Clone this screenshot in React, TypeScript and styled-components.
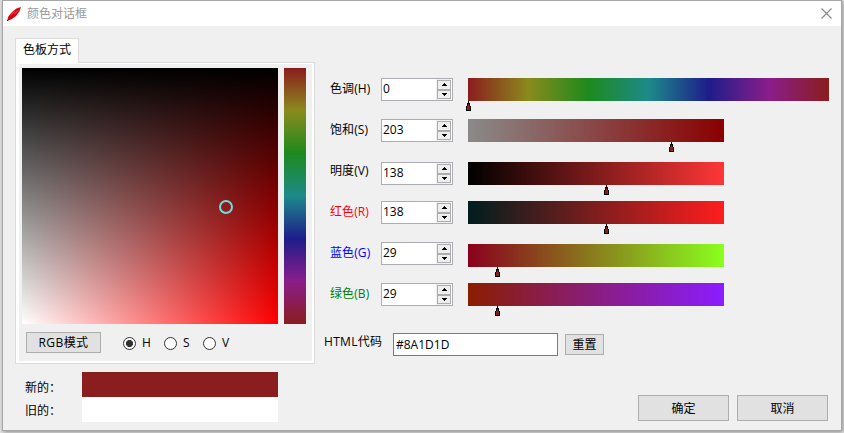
import React from 'react';
import styled, { createGlobalStyle } from 'styled-components';

const GlobalStyle = createGlobalStyle`
  * { box-sizing: border-box; }
  html, body { margin: 0; padding: 0; }
  body {
    width: 844px;
    height: 433px;
    overflow: hidden;
    background: #fff;
    color: #000;
    font: 12px/16px "Open Sans", "Noto Sans CJK SC", sans-serif;
  }
`;

const Desktop = styled.div`
  width: 844px;
  height: 433px;
  padding: 0 2px 2px;
  overflow: hidden;
  background: #e4e4e4;
`;

const Window = styled.div`
  width: 840px;
  height: 431px;
  display: flex;
  flex-direction: column;
  border: 1px solid #a6a6a6;
  background: #f0f0f0;
  box-shadow: 1px 1px 4px #888;
`;

const TitleBar = styled.header`
  flex: none;
  height: 25px;
  display: flex;
  align-items: center;
  padding: 0 9px 0 3px;
  background: #fff;
  color: #999;
`;

const Title = styled.span`
  margin-left: 5px;
  flex: 1;
`;

const Body = styled.main`
  flex: 1;
  display: flex;
`;

const LeftPane = styled.section`
  width: 300px;
  margin: 12px 0 0 12px;
`;

const Tab = styled.div`
  width: 64px;
  height: 25px;
  padding: 3px 0 0 7px;
  margin-bottom: -1px;
  position: relative;
  border: 1px solid #dcdcdc;
  border-bottom: 0;
  background: #fff;
`;

const Panel = styled.div`
  width: 300px;
  height: 302px;
  border: 1px solid #dcdcdc;
  background: #f0f0f0;
  box-shadow: inset 3px 0 #fff, inset -2px 0 #fff, inset 0 1px #fff, inset 0 -2px #fff;
  padding: 5px 0 0 6px;
`;

const Pickers = styled.div`
  display: flex;
  gap: 6px;
`;

const Field = styled.div`
  width: 256px;
  height: 256px;
  position: relative;
  background: linear-gradient(to bottom, #000, transparent), linear-gradient(to right, #fff, #f00);
`;

const Cursor = styled.div`
  position: absolute;
  left: 196.5px;
  top: 131.5px;
  width: 14px;
  height: 14px;
  border: 2px solid #6edcdc;
  border-radius: 50%;
`;

const hueStops = '#8a1d1d, #8a8a1d, #1d8a1d, #1d8a8a, #1d1d8a, #8a1d8a, #8a1d1d';

const HueStrip = styled.div`
  width: 22px;
  height: 256px;
  background: linear-gradient(to bottom, ${hueStops});
`;

const ModeRow = styled.div`
  display: flex;
  align-items: center;
  margin: 8px 0 0 4px;
`;

const Button = styled.button<{ $w: number; $h: number; $spacing?: number }>`
  width: ${p => p.$w}px;
  height: ${p => p.$h}px;
  padding: 1px 0 0;
  border: 1px solid #adadad;
  background: #e1e1e1;
  color: #000;
  font: inherit;
  letter-spacing: ${p => p.$spacing ?? 0}px;
  white-space: nowrap;
`;

const ModeOptions = styled.div`
  display: grid;
  grid-template-columns: 41px 39px 30px;
  margin: 1px 0 0 22px;
`;

const Option = styled.label`
  display: flex;
  align-items: center;
  gap: 6px;
`;

const Dot = styled.span<{ $on?: boolean }>`
  width: 13px;
  height: 13px;
  border: 1px solid #333;
  border-radius: 50%;
  background: ${p => (p.$on ? 'radial-gradient(circle, #333 3.2px, #fff 3.9px)' : '#fff')};
`;

const Compare = styled.div`
  display: grid;
  grid-template-columns: 57px 196px;
  grid-template-rows: 25px 25px;
  padding: 8px 0 0 10px;
`;

const CompareLabel = styled.span<{ $lift?: number }>`
  padding-top: ${p => 8 - (p.$lift ?? 0)}px;
  white-space: nowrap;
`;

const Swatch = styled.div<{ $color: string }>`
  background: ${p => p.$color};
`;

const RightPane = styled.section`
  flex: 1;
  display: flex;
  flex-direction: column;
  padding-top: 52px;
`;

const Channel = styled.div<{ $h: number }>`
  height: ${p => p.$h}px;
  display: flex;
  align-items: flex-start;
  padding-left: 15px;
`;

const ChannelLabel = styled.label<{ $color: string; $top: number }>`
  width: 51px;
  padding-top: ${p => p.$top}px;
  color: ${p => p.$color};
  letter-spacing: 0.1px;
  white-space: nowrap;
`;

const Spin = styled.div`
  width: 72px;
  height: 23px;
  display: flex;
  border: 1px solid #abadb3;
  background: #fff;
`;

const SpinValue = styled.span`
  flex: 1;
  padding: 2px 0 0 1px;
`;

const Arrows = styled.div`
  width: 16px;
  height: 21px;
  display: flex;
  flex-direction: column;
  padding: 1px 0 1px 1px;
  background: #f0f0f0;
  border-right: 1px solid #fff;
`;

const Arrow = styled.span`
  flex: 1;
  width: 14px;
  display: flex;
  align-items: center;
  justify-content: center;
  border: 1px solid #adadad;
  background: #eee;
`;

const Slider = styled.div<{ $wide?: boolean; $top: number }>`
  width: ${p => (p.$wide ? 361 : 256)}px;
  margin: ${p => p.$top}px 0 0 15px;
`;

const Track = styled.div<{ $fill: string }>`
  height: 23px;
  background: linear-gradient(to right, ${p => p.$fill});
`;

const Handle = styled.svg<{ $at: number }>`
  display: block;
  margin-left: ${p => p.$at - 2}px;
`;

const HtmlRow = styled.div`
  display: flex;
  padding: 5px 0 0 9px;
`;

const HtmlLabel = styled.label`
  width: 69px;
  padding-top: 1px;
  letter-spacing: 0.3px;
  white-space: nowrap;
`;

const HtmlInput = styled.div`
  width: 165px;
  height: 23px;
  margin-right: 7px;
  padding: 3px 0 0 2px;
  border: 1px solid #7a7a7a;
  background: #fff;
`;

const ResetWrap = styled.div`
  padding-top: 1px;
`;

const Footer = styled.footer`
  display: flex;
  justify-content: flex-end;
  gap: 8px;
  margin: auto 13px 9px 0;
`;

const LogoIcon = () => (
  <svg width="16" height="16" viewBox="0 0 16 16">
    <path d="M1 15 2.4 10.5 6 6 10.5 2.5 15 1 13.4 5.6 10 10 5.5 13.3Z" fill="#d3070f" />
    <path d="m1 15 2.2-2.2" stroke="#6d1015" />
    <path d="m5 8.8 4-3.6M8.5 8l3.5-3.6" stroke="#f4636a" strokeWidth=".8" />
  </svg>
);

const CloseIcon = () => (
  <svg width="11" height="11" viewBox="0 0 11 11">
    <path d="m.5.5 10 10m0-10-10 10" stroke="#888" strokeWidth="1.1" fill="none" />
  </svg>
);

const Triangle = ({ down }: { down?: boolean }) => (
  <svg width="5" height="3" viewBox="0 0 5 3" shapeRendering="crispEdges">
    <path d={down ? 'M0 0h5v1H4v1H3v1H2V2H1V1H0Z' : 'M2 0h1v1h1v1h1v1H0V2h1V1h1Z'} />
  </svg>
);

type ChannelData = {
  label: string;
  color: string;
  value: number;
  fill: string;
  at: number;
  h: number;
  labelTop: number;
  barTop?: number;
  wide?: boolean;
};

const channels: ChannelData[] = [
  { label: '色调(H)', color: '#000', value: 0, fill: hueStops, at: 0, h: 41, labelTop: 3, wide: true },
  { label: '饱和(S)', color: '#000', value: 203, fill: '#8a8a8a, #8a0000', at: 203, h: 43, labelTop: 3 },
  { label: '明度(V)', color: '#000', value: 138, fill: '#000, #ff3636', at: 138, h: 39, labelTop: 1 },
  { label: '红色(R)', color: '#f00', value: 138, fill: '#001d1d, #ff1d1d', at: 138, h: 41, labelTop: 3 },
  { label: '蓝色(G)', color: '#00f', value: 29, fill: '#8a001d, #8aff1d', at: 29, h: 41, labelTop: 3, barTop: 2 },
  { label: '绿色(B)', color: '#008000', value: 29, fill: '#8a1d00, #8a1dff', at: 29, h: 45, labelTop: 3 },
];

export default function App() {
  return (
    <Desktop>
      <GlobalStyle />
      <Window>
        <TitleBar>
          <LogoIcon />
          <Title>颜色对话框</Title>
          <CloseIcon />
        </TitleBar>
        <Body>
          <LeftPane>
            <Tab>色板方式</Tab>
            <Panel>
              <Pickers>
                <Field><Cursor /></Field>
                <HueStrip />
              </Pickers>
              <ModeRow>
                <Button $w={75} $h={21} $spacing={0.4}>RGB模式</Button>
                <ModeOptions>
                  {['H', 'S', 'V'].map((name, i) => (
                    <Option key={name}><Dot $on={i === 0} />{name}</Option>
                  ))}
                </ModeOptions>
              </ModeRow>
            </Panel>
            <Compare>
              <CompareLabel>新的：</CompareLabel>
              <Swatch $color="#8a1d1d" />
              <CompareLabel $lift={2}>旧的：</CompareLabel>
              <Swatch $color="#fff" />
            </Compare>
          </LeftPane>
          <RightPane>
            {channels.map(c => (
              <Channel key={c.label} $h={c.h}>
                <ChannelLabel $color={c.color} $top={c.labelTop}>{c.label}</ChannelLabel>
                <Spin>
                  <SpinValue>{c.value}</SpinValue>
                  <Arrows>
                    <Arrow><Triangle /></Arrow>
                    <Arrow><Triangle down /></Arrow>
                  </Arrows>
                </Spin>
                <Slider $wide={c.wide} $top={c.barTop ?? 0}>
                  <Track $fill={c.fill} />
                  <Handle $at={c.at} width="5" height="10" viewBox="0 0 5 10" shapeRendering="crispEdges">
                    <path d="M2 0h1v2h1v3h1v5H0V5h1V2h1Z" fill="#000" />
                    <path d="M2 3h1v2h1v4H1V5h1Z" fill="#8a1d1d" />
                  </Handle>
                </Slider>
              </Channel>
            ))}
            <HtmlRow>
              <HtmlLabel>HTML代码</HtmlLabel>
              <HtmlInput>#8A1D1D</HtmlInput>
              <ResetWrap><Button $w={39} $h={21}>重置</Button></ResetWrap>
            </HtmlRow>
            <Footer>
              <Button $w={91} $h={26}>确定</Button>
              <Button $w={91} $h={26}>取消</Button>
            </Footer>
          </RightPane>
        </Body>
      </Window>
    </Desktop>
  );
}
